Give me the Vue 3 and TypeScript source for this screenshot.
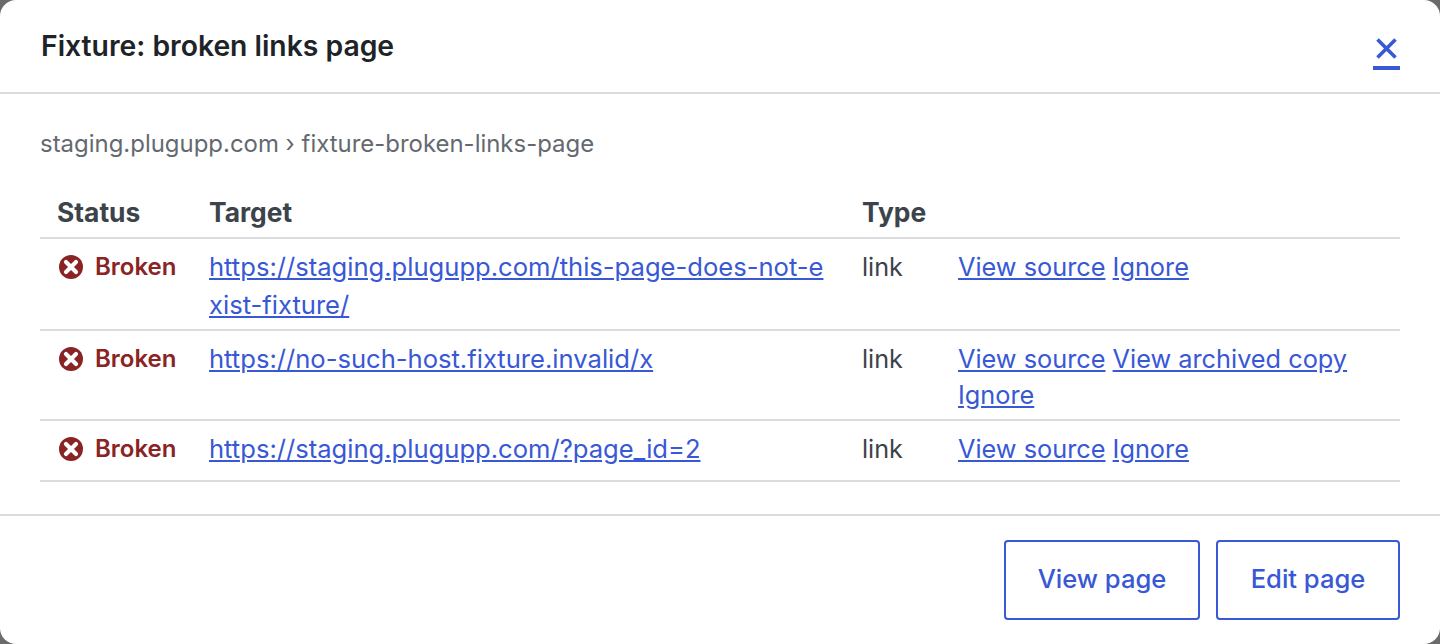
<script setup lang="ts">
interface Row { url: string[]; actions: string[] }
const rows: Row[] = [
  { url: ['https://staging.plugupp.com/this-page-does-not-e', 'xist-fixture/'], actions: ['View source', 'Ignore'] },
  { url: ['https://no-such-host.fixture.invalid/x'], actions: ['View source', 'View archived copy', 'Ignore'] },
  { url: ['https://staging.plugupp.com/?page_id=2'], actions: ['View source', 'Ignore'] },
]
</script>

<template>
  <div class="backdrop">
    <div class="modal">
      <header class="head">
        <h2 class="title">Fixture: broken links page</h2>
        <a class="close" href="#" aria-label="Close">
          <svg width="21" height="21" viewBox="0 0 21 21"><path d="M1.500 1.500L19.500 19.500M19.500 1.500L1.500 19.500" stroke="currentColor" stroke-width="3.600" fill="none" /></svg>
        </a>
      </header>
      <section class="body">
        <p class="crumb">staging.plugupp.com › fixture-broken-links-page</p>
        <table class="links">
          <thead>
            <tr>
              <th class="c-status">Status</th>
              <th class="c-target">Target</th>
              <th class="c-type">Type</th>
              <th class="c-actions"></th>
            </tr>
          </thead>
          <tbody>
            <tr v-for="(r, i) in rows" :key="i">
              <td class="status">
                <span class="badge">
                  <svg width="24" height="24" viewBox="0 0 24 24">
                    <circle cx="12" cy="12" r="12" fill="currentColor" />
                    <path d="M7 7L17 17M17 7L7 17" stroke="#fff" stroke-width="4.200" stroke-linecap="round" fill="none" />
                  </svg>
                  Broken
                </span>
              </td>
              <td class="target"><a href="#" class="url"><template v-for="(part, j) in r.url" :key="j"><br v-if="j > 0" />{{ part }}</template></a></td>
              <td class="type">link</td>
              <td class="actions"><template v-for="(a, j) in r.actions" :key="j"><a href="#">{{ a }}</a>{{ ' ' }}</template></td>
            </tr>
          </tbody>
        </table>
      </section>
      <footer class="foot">
        <a class="btn view" href="#">View page</a>
        <a class="btn edit" href="#">Edit page</a>
      </footer>
    </div>
  </div>
</template>

<style>
html, body { margin: 0; background: #fff; }
</style>

<style scoped>
.backdrop { width: 1440px; height: 644px; background: #6b6b6b; overflow: hidden; font-family: Inter, "Liberation Sans", sans-serif; font-size: 24px; color: #3c434a; }
.modal { height: 644px; background: #fff; border-radius: 16px; display: flex; flex-direction: column; }
.head { height: 92px; flex: none; border-bottom: 2px solid #dcdcde; padding: 0 40px 0 41px; display: flex; justify-content: space-between; }
.title { margin: 28px 0 0; font-size: 28.300px; line-height: 36px; font-weight: 600; color: #1d2327; }
.close { margin-top: 38px; width: 27px; height: 32px; color: #3858d6; border-bottom: 4px solid #3858d6; box-sizing: border-box; display: flex; justify-content: center; }
.body { flex: 1; padding: 32px 40px 0; }
.crumb { margin: 0; line-height: 36px; color: #646970; font-size: 23.950px; }
.links { margin-top: 32px; width: 1360px; border-collapse: collapse; table-layout: fixed; }
th { text-align: left; font-weight: 700; font-size: 26.400px; padding: 0 16px 7px; line-height: 36px; border-bottom: 2px solid #dcdcde; box-sizing: border-box; }
.c-status { width: 153px; padding-left: 17px; }
.c-target { width: 653px; }
.c-type { width: 96px; }
td { vertical-align: top; padding: 10px 16px 4px; line-height: 38px; border-bottom: 2px solid #dcdcde; }
a { color: #3858d6; }
.status { padding: 9px 16px 8px 19px; }
.badge { display: inline-flex; align-items: center; gap: 12px; color: #8a2424; font-weight: 600; font-size: 24px; }
.target { font-size: 25.580px; padding-top: 9px; padding-bottom: 5px; }
.type { font-size: 25.200px; padding-top: 9px; }
.actions { font-size: 25.300px; line-height: 36px; padding-bottom: 6px; }
.foot { height: 130px; flex: none; box-sizing: border-box; border-top: 2px solid #dcdcde; padding: 24px 40px 0; display: flex; justify-content: flex-end; gap: 16px; }
.btn { height: 80px; box-sizing: border-box; border: 2px solid #3858d6; border-radius: 4px; padding-bottom: 3px; display: flex; align-items: center; justify-content: center; text-decoration: none; font-weight: 500; font-size: 25.600px; }
.view { width: 196px; }
.edit { width: 184px; }
</style>
